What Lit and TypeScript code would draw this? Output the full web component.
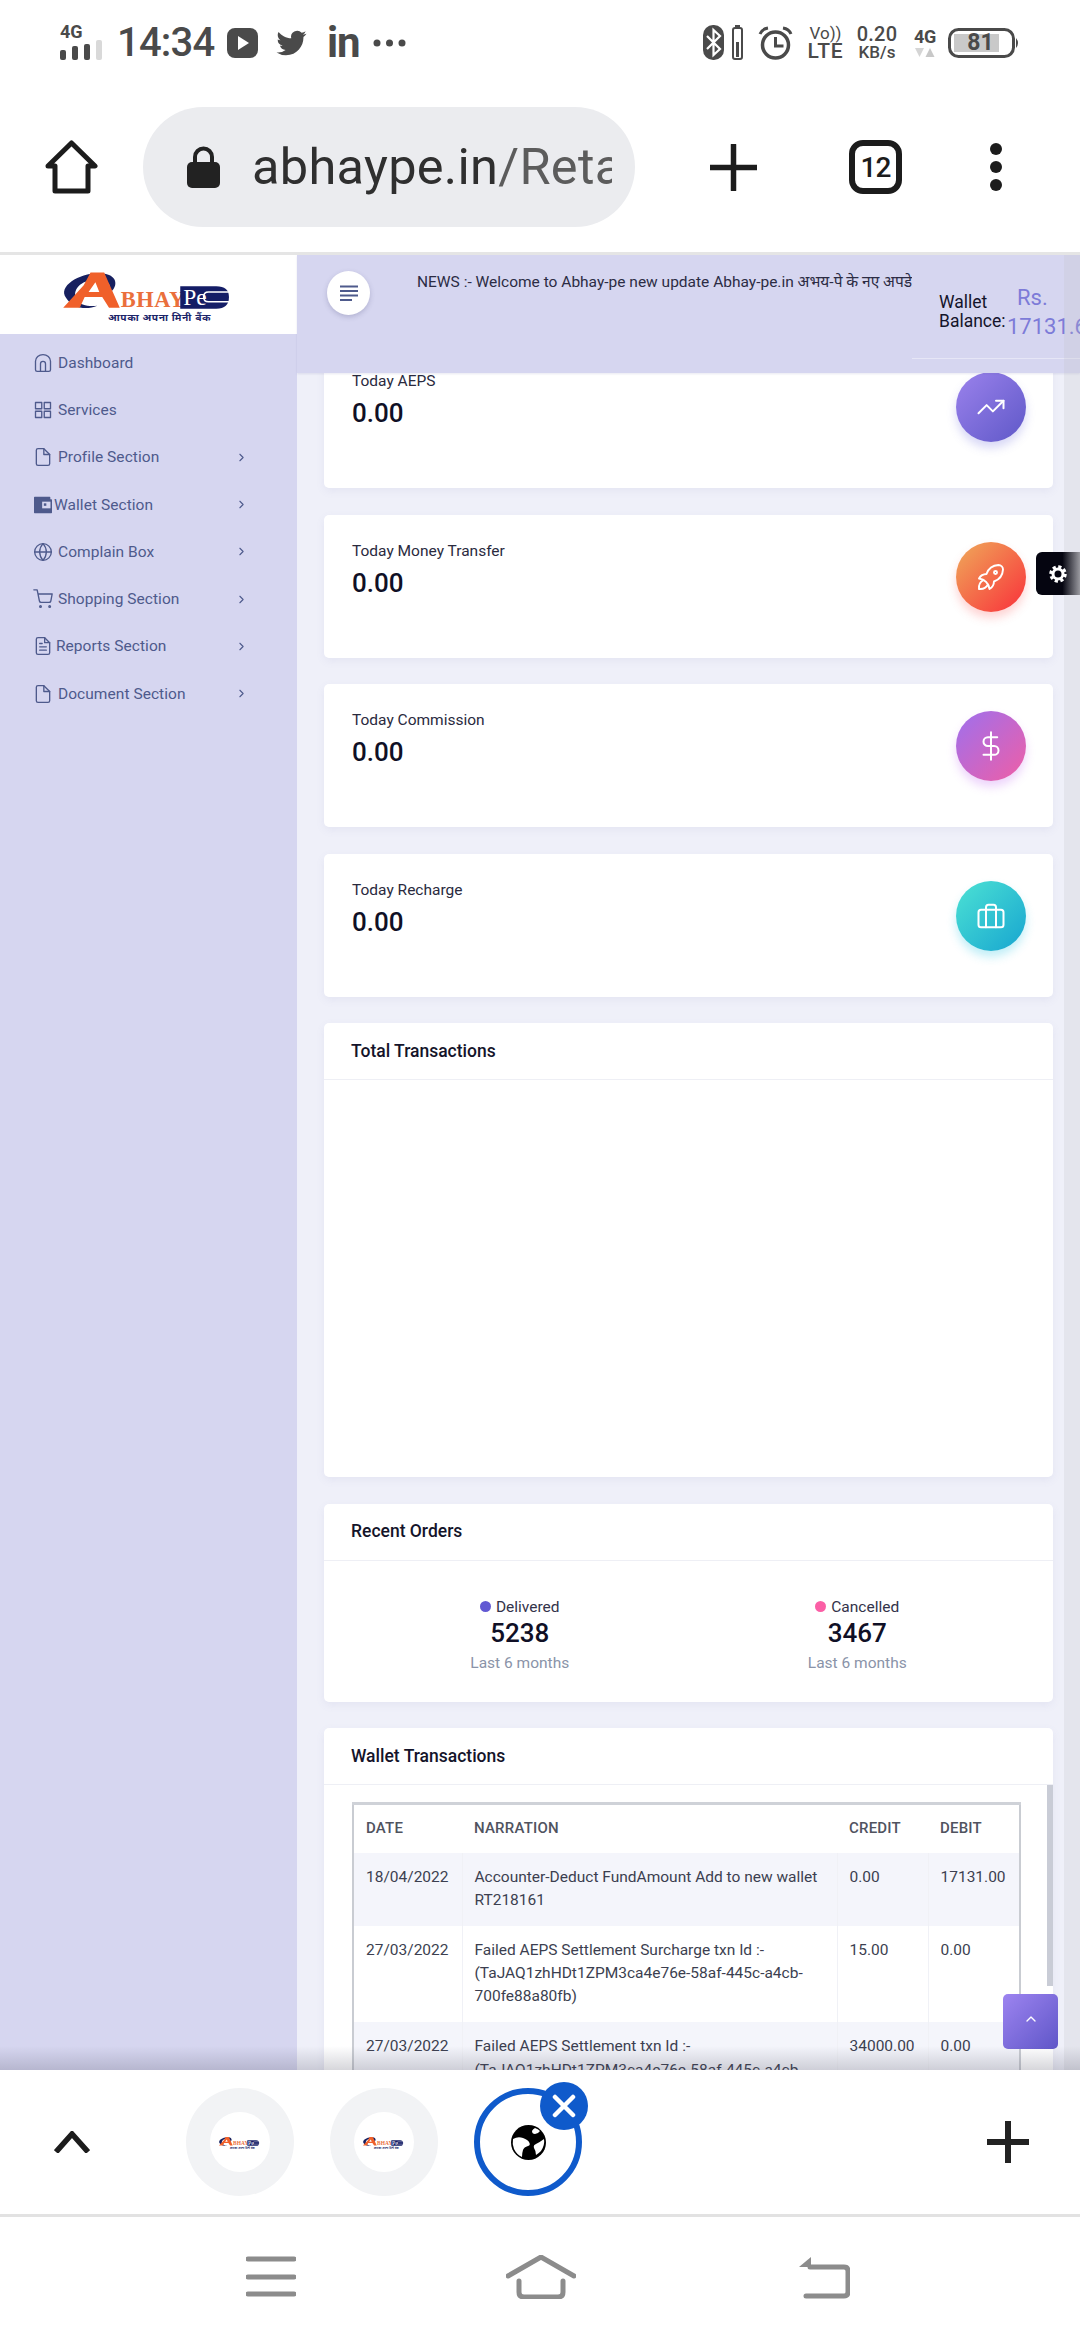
import { LitElement, html, css, svg } from "lit";
import { customElement } from "lit/decorators.js";

const logo = (cls: string) => html`<svg class=${cls} viewBox="0 0 220 80" aria-hidden="true">
  <path d="M24 43C14 30 42 15 62 18C78 20 78 33 66 40C72 30 68 24 56 24C42 24 30 32 34 44C38 51 48 52 56 51C44 56 30 53 24 43Z" fill="#17205f"/>
  <path d="M21 53L42 30L49 17H63L79 53H68L61 42H43L38 53ZM47 37H58L54 27Z" fill="#f0602a" fill-rule="evenodd"/>
  <text x="80" y="52" class="lg-b">BHAY</text>
  <path d="M141 31H178Q191 31 191 42Q191 54 178 54H141Z" fill="#141d66"/>
  <text x="144" y="50" class="lg-p">Pe</text>
  <path d="M191 37H170Q165 37 165 42Q165 47 170 47H191" fill="none" stroke="#fff" stroke-width="1.6"/>
  <text x="67" y="67" class="lg-h">आपका अपना मिनी बैंक</text>
</svg>`;

const feather = (body: unknown, cls = "ico") => html`<svg class=${cls} viewBox="0 0 24 24" fill="none" stroke="currentColor" stroke-width="2" stroke-linecap="round" stroke-linejoin="round" aria-hidden="true">${body}</svg>`;

const fileIcon = svg`<path d="M13 2H6a2 2 0 0 0-2 2v16a2 2 0 0 0 2 2h12a2 2 0 0 0 2-2V9z"/><path d="M13 2v7h7"/>`;
const sideItems: { label: string; icon: unknown; chev: boolean; cls?: string }[] = [
  { label: "Dashboard", chev: false, icon: svg`<path d="M3 10a9 8 0 0 1 18 0v10a2 2 0 0 1-2 2H5a2 2 0 0 1-2-2z"/><path d="M9 22V13a3 3 0 0 1 6 0v9"/>` },
  { label: "Services", chev: false, icon: svg`<rect x="3" y="3" width="7.5" height="7.5"/><rect x="13.5" y="3" width="7.5" height="7.5"/><rect x="13.5" y="13.5" width="7.5" height="7.5"/><rect x="3" y="13.5" width="7.5" height="7.5"/>` },
  { label: "Profile Section", chev: true, icon: fileIcon },
  { label: "Wallet Section", chev: true, cls: "tight", icon: svg`<path d="M2 3h18v3h2v15H2z" fill="currentColor"/><rect x="11" y="8" width="10" height="8" fill="#d6d6f0" stroke="none"/><rect x="13" y="10" width="3" height="3" fill="currentColor" stroke="none"/>` },
  { label: "Complain Box", chev: true, icon: svg`<circle cx="12" cy="12" r="10"/><path d="M2 12h20"/><path d="M12 2a15 15 0 0 1 4 10 15 15 0 0 1-4 10 15 15 0 0 1-4-10 15 15 0 0 1 4-10z"/>` },
  { label: "Shopping Section", chev: true, icon: svg`<circle cx="9" cy="21" r="1"/><circle cx="20" cy="21" r="1"/><path d="M1 1h4l2.7 13.4a2 2 0 0 0 2 1.6h9.7a2 2 0 0 0 2-1.6L23 6H6"/>` },
  { label: "Reports Section", chev: true, cls: "tight2", icon: svg`<path d="M14 2H6a2 2 0 0 0-2 2v16a2 2 0 0 0 2 2h12a2 2 0 0 0 2-2V8z"/><path d="M14 2v6h6"/><path d="M16 13H8"/><path d="M16 17H8"/><path d="M11 9H8"/>` },
  { label: "Document Section", chev: true, icon: fileIcon },
];

const stats = [
  { label: "Today AEPS", cls: "g-purple", big: false, icon: svg`<path d="M22 7l-8.5 8.5-5-5L2 17"/><path d="M16 7h6v6"/>` },
  { label: "Today Money Transfer", cls: "g-orange", big: true, icon: svg`<path d="M4 13a8 8 0 0 1 7 7a6 6 0 0 0 3-5a9 9 0 0 0 6-8a3 3 0 0 0-3-3a9 9 0 0 0-8 6a6 6 0 0 0-5 3"/><path d="M7 14a6 6 0 0 0-3 6a6 6 0 0 0 6-3"/><circle cx="15" cy="9" r="1"/>` },
  { label: "Today Commission", cls: "g-pink", big: false, icon: svg`<path d="M12 1v22"/><path d="M17 5H9.5a3.5 3.5 0 0 0 0 7h5a3.5 3.5 0 0 1 0 7H6"/>` },
  { label: "Today Recharge", cls: "g-teal", big: false, icon: svg`<rect x="2" y="7" width="20" height="14" rx="2"/><path d="M16 21V5a2 2 0 0 0-2-2h-4a2 2 0 0 0-2 2v16"/>` },
];

const rows = [
  ["18/04/2022", "Accounter-Deduct FundAmount Add to new wallet RT218161", "0.00", "17131.00"],
  ["27/03/2022", "Failed AEPS Settlement Surcharge txn Id :- (TaJAQ1zhHDt1ZPM3ca4e76e-58af-445c-a4cb-700fe88a80fb)", "15.00", "0.00"],
  ["27/03/2022", "Failed AEPS Settlement txn Id :- (TaJAQ1zhHDt1ZPM3ca4e76e-58af-445c-a4cb-700fe88a80fb)", "34000.00", "0.00"],
];

@customElement("app-root")
export class AppRoot extends LitElement {
  static styles = css`
    :host { display: block; width: 1080px; height: 2340px; overflow: hidden; background: #fff; font-family: Roboto, "Noto Sans Devanagari", "Lohit Devanagari", "Noto Sans", sans-serif; color: #15152a; }
    * { box-sizing: border-box; }
    svg { display: block; flex: none; }

    .status { height: 85px; display: flex; justify-content: space-between; align-items: center; padding: 0 60px 0 60px; color: #4a4a4a; }
    .st-group { display: flex; align-items: center; }
    .net { width: 44px; margin-right: 13px; }
    .net-t { font-size: 18px; font-weight: 700; line-height: 14px; letter-spacing: -.2px; }
    .bars { display: flex; align-items: flex-end; gap: 6px; height: 20px; margin-top: 1px; }
    .bars i { width: 6px; background: #4a4a4a; border-radius: 2px; }
    .bars i:nth-child(1) { height: 10px; } .bars i:nth-child(2) { height: 14px; } .bars i:nth-child(3) { height: 16px; } .bars i:nth-child(4) { height: 20px; background: #d9d9d9; }
    .time { font-size: 40px; font-weight: 500; line-height: 44px; width: 110px; letter-spacing: -.8px; }
    .yt { width: 31px; height: 30px; margin-right: 17px; }
    .tw { width: 33px; height: 30px; margin-right: 19px; }
    .in { font-size: 42px; font-weight: 700; line-height: 44px; width: 46px; letter-spacing: -1px; }
    .more { width: 33px; height: 8px; }
    .bt { width: 21px; height: 35px; margin-right: 8px; }
    .bs { width: 11px; height: 35px; margin-right: 15px; }
    .alarm { width: 35px; height: 35px; margin-right: 14px; }
    .volte { width: 37px; margin-right: 12px; text-align: center; }
    .vo { font-size: 17px; line-height: 18px; font-weight: 400; white-space: nowrap; letter-spacing: 0; }
    .lte { font-size: 21px; line-height: 19px; font-weight: 500; letter-spacing: .8px; }
    .speed { width: 42px; margin-right: 14px; text-align: center; }
    .sp1 { font-size: 20px; line-height: 19px; font-weight: 500; letter-spacing: .2px; }
    .sp2 { font-size: 17px; line-height: 17px; font-weight: 500; white-space: nowrap; }
    .g4 { width: 26px; margin-right: 10px; text-align: center; }
    .g4t { font-size: 18px; font-weight: 700; line-height: 18px; letter-spacing: -.3px; }
    .tri { width: 20px; height: 9px; margin: 2px auto 0; }
    .batt { width: 72px; height: 30px; position: relative; }
    .batt svg { width: 72px; height: 30px; }
    .batt span { position: absolute; left: 9px; right: 16px; top: 0; line-height: 30px; text-align: center; font-size: 23px; font-weight: 700; }

    .toolbar { height: 170px; border-bottom: 3px solid #e5e5e5; display: flex; align-items: center; padding: 0 0 3px 45px; position: relative; }
    .tb-home { width: 53px; height: 54px; margin-right: 45px; }
    .pill { width: 492px; height: 120px; border-radius: 60px; background: #ebecef; display: flex; align-items: center; padding-left: 44px; margin-right: 75px; }
    .lock { width: 33px; height: 42px; margin-right: 32px; }
    .url { width: 360px; overflow: hidden; white-space: nowrap; font-size: 50.5px; letter-spacing: .3px; line-height: 60px; color: #2f2f2f; }
    .url span { color: #5c5c5c; }
    .tb-plus { width: 47px; height: 47px; margin-right: 92px; }
    .tabbox { width: 53px; height: 54px; border: 6px solid #1c1c1c; border-radius: 14px; font-size: 28px; font-weight: 500; display: flex; align-items: center; justify-content: center; color: #1c1c1c; letter-spacing: -1px; margin-right: 88px; }
    .dots { display: flex; flex-direction: column; gap: 6px; }
    .dots i { width: 12px; height: 12px; border-radius: 50%; background: #1c1c1c; }

    .viewport { height: 1815px; display: flex; position: relative; overflow: hidden; background: #eff0f9; }
    .side { width: 297px; flex: none; background: #d6d6f0; }
    .brand { height: 79px; background: #fff; display: flex; justify-content: center; align-items: center; }
    .brand-logo { width: 220px; height: 78px; margin-left: 3px; }
    .lg-b { font: 700 23px "Liberation Serif", serif; fill: #ea6f3c; letter-spacing: .6px; }
    .lg-p { font: 400 24px "Liberation Serif", serif; fill: #fff; }
    .lg-h { font: 700 10.5px "Noto Sans Devanagari", "Lohit Devanagari", "Noto Sans", sans-serif; fill: #1b2468; letter-spacing: .6px; }
    .menu { padding-top: 5px; }
    .m-item { height: 47.3px; display: flex; align-items: center; padding: 0 49px 0 33px; color: #4e5a8c; font-size: 15.5px; letter-spacing: .05px; white-space: nowrap; }
    .m-item .ico { width: 20px; height: 20px; margin-right: 5px; stroke-width: 1.6; }
    .m-item.tight .ico { margin-right: 1px; }
    .m-item.tight2 .ico { margin-right: 3px; }
    .m-item .chev { width: 13px; height: 13px; margin-left: auto; margin-right: 0; }

    .main { flex: 1; min-width: 0; }
    .head { height: 118px; background: #d6d6f0; position: relative; z-index: 2; display: flex; box-shadow: 0 1px 2px rgba(100,100,160,.15); }
    .burger { width: 43px; height: 44px; border-radius: 50%; background: #fff; box-shadow: 0 2px 5px rgba(70,70,120,.25); margin: 16px 47px 0 30px; display: flex; align-items: center; justify-content: center; flex: none; }
    .burger svg { width: 20px; height: 16px; }
    .news { width: 495px; flex: none; overflow: hidden; white-space: nowrap; font-size: 15.5px; line-height: 20px; padding-top: 17px; color: #2c2c44; }
    .bal { width: 168px; height: 104px; flex: none; display: flex; border-bottom: 1px solid #e6e6f6; padding: 38px 0 0 27px; overflow: hidden; }
    .bal-l { font-size: 17.5px; line-height: 19px; color: #14142a; flex: none; width: 68px; padding-top: 0; }
    .bal-v { font-size: 22px; line-height: 29px; color: #7d7bd8; margin-top: -10px; white-space: nowrap; }
    .bal-v div:first-child { padding-left: 10px; }

    .content { padding: 0 27px; margin-top: -28px; display: flex; flex-direction: column; gap: 26.5px; }
    .card { background: #fff; border-radius: 5px; box-shadow: 0 3px 8px rgba(120,120,180,.09); position: relative; }
    .stat { height: 143px; display: flex; justify-content: space-between; padding: 27px 27px 0 28px; }
    .st-l { font-size: 15.5px; line-height: 18px; color: #2a2a3e; padding-top: 0; }
    .st-v { font-size: 26px; font-weight: 500; line-height: 30px; color: #101026; margin-top: 8px; }
    .circle { width: 70px; height: 70px; border-radius: 50%; display: flex; align-items: center; justify-content: center; color: #fff; flex: none; }
    .circle .ico { width: 30px; height: 30px; stroke-width: 1.6; }
    .circle .ico.big { width: 36px; height: 36px; stroke-width: 1.3; }
    .g-purple { background: linear-gradient(135deg, #9b82ec, #5f58c8); box-shadow: 0 6px 10px rgba(100,100,220,.25); }
    .g-orange { background: linear-gradient(135deg, #efaa5a, #f9303a); box-shadow: 0 6px 10px rgba(250,80,80,.25); }
    .g-pink { background: linear-gradient(135deg, #9e70ee, #ef5ea6); box-shadow: 0 6px 10px rgba(190,100,240,.28); }
    .g-teal { background: linear-gradient(135deg, #4ce2d4, #17a5d0); box-shadow: 0 6px 10px rgba(50,200,230,.3); }
    .c-head { height: 57px; border-bottom: 1px solid #eeeff5; padding: 0 27px 1px; display: flex; align-items: center; font-size: 17.5px; font-weight: 500; color: #14142a; }
    .total { height: 454px; }
    .orders { height: 198px; }
    .o-body { display: grid; grid-template-columns: 1fr 1fr; padding: 36px 27px 0; text-align: center; }
    .o-lab { font-size: 15.5px; line-height: 20px; color: #33334a; display: flex; justify-content: center; align-items: center; gap: 5px; }
    .dot { width: 11px; height: 11px; border-radius: 50%; }
    .dot.a { background: #6259d3; } .dot.b { background: #fb5fa6; }
    .o-num { font-size: 26px; font-weight: 500; line-height: 32px; color: #101026; }
    .o-sub { font-size: 15.5px; line-height: 20px; color: #8a93a8; margin-top: 4px; }
    .wallet { height: 500px; }
    .w-body { padding: 17px 34px 0 28px; }
    table { width: 667px; table-layout: fixed; border-collapse: collapse; border-top: 3px solid #cfd2d8; border-left: 2px solid #c9ccd2; border-right: 2px solid #c9ccd2; font-size: 15.5px; line-height: 23.2px; color: #3c3f50; }
    col.c1 { width: 109px; } col.c2 { width: 375px; } col.c3 { width: 91px; } col.c4 { width: 92px; }
    th { font-weight: 500; font-size: 15px; text-align: left; height: 49px; padding: 0 12px; color: #50535f; letter-spacing: .2px; }
    td { vertical-align: top; padding: 13.4px 12px; border-left: 1px solid #f0f1f6; }
    td:first-child { border-left: 0; }
    tr.odd td { background: #f4f5fb; }
    .w-scroll { position: absolute; right: 0; top: 57px; width: 6px; height: 201px; background: #c9ccd6; }

    .strip { position: absolute; right: 0; top: 0; bottom: 0; width: 16px; background: rgba(190,190,195,.22); z-index: 3; }
    .gear { position: absolute; left: 1036px; top: 297px; width: 44px; height: 43px; border-radius: 6px 0 0 6px; background: linear-gradient(90deg, #050510 60%, #9a9aa0); display: flex; align-items: center; padding-left: 13px; z-index: 4; }
    .gear svg { width: 18px; height: 18px; }
    .totop { position: absolute; left: 1003px; top: 1739px; width: 55px; height: 55px; border-radius: 5px; background: linear-gradient(135deg, #9d84f0, #5f56c8); color: #fff; display: flex; align-items: center; justify-content: center; z-index: 4; }
    .totop .ico { width: 16px; height: 16px; margin-top: -5px; }
    .fade { position: absolute; left: 0; right: 0; bottom: 0; height: 24px; background: linear-gradient(180deg, rgba(70,70,90,0), rgba(70,70,90,.22)); z-index: 5; }

    .tabs { height: 144px; display: flex; align-items: center; position: relative; padding-left: 54px; }
    .up { width: 36px; height: 22px; margin-right: 96px; }
    .tab { width: 108px; height: 108px; border-radius: 50%; background: #f2f3f5; display: flex; align-items: center; justify-content: center; margin-right: 36px; position: relative; flex: none; }
    .tab-in { width: 60px; height: 60px; border-radius: 50%; background: #fff; display: flex; align-items: center; justify-content: center; }
    .tab-logo { width: 52px; height: 19px; }
    .tab.on { background: #fff; border: 6px solid #0f5acb; margin-right: 0; }
    .globe { width: 35px; height: 35px; }
    .close { position: absolute; right: -12px; top: -12px; width: 48px; height: 48px; border-radius: 50%; background: #0f5acb; display: flex; align-items: center; justify-content: center; }
    .close svg { width: 24px; height: 24px; }
    .tab-plus { width: 42px; height: 42px; margin-left: auto; margin-right: 51px; }

    .nav { height: 126px; border-top: 3px solid #e2e2e2; display: flex; padding: 38px 0 0 246px; }
    .nav svg { height: 44px; }
    .n1 { width: 50px; margin-right: 210px; }
    .n2 { width: 70px; margin-right: 222px; }
    .n3 { width: 52px; }
  `;

  render() {
    return html`
      <section class="status">
        <div class="st-group">
          <div class="net"><div class="net-t">4G</div><div class="bars"><i></i><i></i><i></i><i></i></div></div>
          <div class="time">14:34</div>
          <svg class="yt" viewBox="0 0 31 30"><rect width="31" height="30" rx="8" fill="#4a4a4a"/><path d="M11 8l11 7-11 7z" fill="#fff"/></svg>
          <svg class="tw" viewBox="0 0 24 24"><path fill="#4a4a4a" d="M23.953 4.57a10 10 0 01-2.825.775 4.958 4.958 0 002.163-2.723c-.951.555-2.005.959-3.127 1.184a4.92 4.92 0 00-8.384 4.482C7.69 8.095 4.067 6.13 1.64 3.162a4.822 4.822 0 00-.666 2.475c0 1.71.87 3.213 2.188 4.096a4.904 4.904 0 01-2.228-.616v.06a4.923 4.923 0 003.946 4.827 4.996 4.996 0 01-2.212.085 4.936 4.936 0 004.604 3.417 9.867 9.867 0 01-6.102 2.105c-.39 0-.779-.023-1.17-.067a13.995 13.995 0 007.557 2.209c9.053 0 13.998-7.496 13.998-13.985 0-.21 0-.42-.015-.63A9.935 9.935 0 0024 4.59z"/></svg>
          <div class="in">in</div>
          <svg class="more" viewBox="0 0 33 8"><circle cx="4" cy="4" r="3.5" fill="#4a4a4a"/><circle cx="16.5" cy="4" r="3.5" fill="#4a4a4a"/><circle cx="29" cy="4" r="3.5" fill="#4a4a4a"/></svg>
        </div>
        <div class="st-group">
          <svg class="bt" viewBox="0 0 21 35"><rect width="21" height="35" rx="10" fill="#4a4a4a"/><path d="M4 11l13 13-6.5 6V5l6.5 6L4 24" fill="none" stroke="#fff" stroke-width="2.2"/></svg>
          <svg class="bs" viewBox="0 0 11 35"><rect x="3" y="0" width="5" height="3" fill="#4a4a4a"/><rect x="1" y="3" width="9" height="31" rx="2" fill="none" stroke="#4a4a4a" stroke-width="2"/><rect x="4" y="17" width="3" height="15" fill="#4a4a4a"/></svg>
          <svg class="alarm" viewBox="0 0 35 35" fill="none" stroke="#4a4a4a" stroke-width="3.5"><circle cx="17.5" cy="20" r="13"/><path d="M17.5 12v9h8" stroke-width="3"/><path d="M2 9q2-5 8-6M33 9q-2-5-8-6" stroke-width="3"/></svg>
          <div class="volte"><div class="vo">Vo))</div><div class="lte">LTE</div></div>
          <div class="speed"><div class="sp1">0.20</div><div class="sp2">KB/s</div></div>
          <div class="g4"><div class="g4t">4G</div><svg class="tri" viewBox="0 0 20 9"><path d="M0 0h9L4.5 9z" fill="#d5d5d5"/><path d="M10.5 9h9L15 0z" fill="#c8c8c8"/></svg></div>
          <div class="batt"><svg viewBox="0 0 72 30"><rect x="1.5" y="1.5" width="64" height="27" rx="9" fill="none" stroke="#4a4a4a" stroke-width="3"/><path d="M6 6h45v18H6z" fill="#c9c9c9"/><path d="M68 10q4 5 0 10z" fill="#4a4a4a"/></svg><span>81</span></div>
        </div>
      </section>

      <section class="toolbar">
        <svg class="tb-home" viewBox="0 0 53 54" fill="none" stroke="#1c1c1c" stroke-width="5" stroke-linejoin="round"><path d="M3 26L26.5 3 50 26H43V51H10V26Z"/></svg>
        <div class="pill">
          <svg class="lock" viewBox="0 0 33 42"><path d="M8 18V11a8.5 8.5 0 0 1 17 0v7" fill="none" stroke="#222" stroke-width="4"/><rect y="16" width="33" height="26" rx="5" fill="#222"/></svg>
          <div class="url">abhaype.in<span>/Retailer</span></div>
        </div>
        <svg class="tb-plus" viewBox="0 0 47 47"><path d="M23.5 1v45M1 23.5h45" stroke="#1c1c1c" stroke-width="5.5" stroke-linecap="round"/></svg>
        <div class="tabbox">12</div>
        <div class="dots"><i></i><i></i><i></i></div>
      </section>

      <section class="viewport">
        <aside class="side">
          <div class="brand">${logo("brand-logo")}</div>
          <nav class="menu">
            ${sideItems.map((m) => html`<div class="m-item ${m.cls ?? ""}">${feather(m.icon)}<span>${m.label}</span>${m.chev ? feather(svg`<path d="M9 18l6-6-6-6"/>`, "chev") : ""}</div>`)}
          </nav>
        </aside>
        <main class="main">
          <header class="head">
            <div class="burger"><svg viewBox="0 0 20 16"><path d="M1 1.5h18M1 6h18M1 10.5h18M1 15h12" stroke="#4e5a8c" stroke-width="1.8"/></svg></div>
            <div class="news">NEWS :- Welcome to Abhay-pe new update Abhay-pe.in अभय-पे के नए अपडेट में आपका स्वागत है</div>
            <div class="bal">
              <div class="bal-l">Wallet Balance:</div>
              <div class="bal-v"><div>Rs.</div><div>17131.68</div></div>
            </div>
          </header>
          <div class="content">
            ${stats.map((s) => html`<div class="card stat"><div><div class="st-l">${s.label}</div><div class="st-v">0.00</div></div><div class="circle ${s.cls}">${feather(s.icon, s.big ? "ico big" : "ico")}</div></div>`)}
            <div class="card total"><div class="c-head">Total Transactions</div></div>
            <div class="card orders">
              <div class="c-head">Recent Orders</div>
              <div class="o-body">
                <div><div class="o-lab"><span class="dot a"></span>Delivered</div><div class="o-num">5238</div><div class="o-sub">Last 6 months</div></div>
                <div><div class="o-lab"><span class="dot b"></span>Cancelled</div><div class="o-num">3467</div><div class="o-sub">Last 6 months</div></div>
              </div>
            </div>
            <div class="card wallet">
              <div class="c-head">Wallet Transactions</div>
              <div class="w-scroll"></div>
              <div class="w-body">
                <table>
                  <colgroup><col class="c1"/><col class="c2"/><col class="c3"/><col class="c4"/></colgroup>
                  <thead><tr><th>DATE</th><th>NARRATION</th><th>CREDIT</th><th>DEBIT</th></tr></thead>
                  <tbody>${rows.map((r, i) => html`<tr class=${i % 2 === 0 ? "odd" : ""}>${r.map((c) => html`<td>${c}</td>`)}</tr>`)}</tbody>
                </table>
              </div>
            </div>
          </div>
        </main>
        <div class="strip"></div>
        <div class="gear"><svg viewBox="0 0 18 18" fill="none" stroke="#fff"><circle cx="9" cy="9" r="7" stroke-width="3.5" stroke-dasharray="3.1 2.4"/><circle cx="9" cy="9" r="5" stroke-width="3"/></svg></div>
        <div class="totop">${feather(svg`<path d="M6 15l6-6 6 6"/>`)}</div>
        <div class="fade"></div>
      </section>

      <section class="tabs">
        <svg class="up" viewBox="0 0 36 22" fill="none" stroke="#1c1c1c" stroke-width="5.5"><path d="M2 21L18 3l16 18" stroke-linejoin="miter"/></svg>
        <div class="tab"><div class="tab-in">${logo("tab-logo")}</div></div>
        <div class="tab"><div class="tab-in">${logo("tab-logo")}</div></div>
        <div class="tab on">
          <svg class="globe" viewBox="0 0 35 35"><circle cx="17.5" cy="17.5" r="17.5" fill="#000"/><path d="M2 14q5-3 10-1t6 4q2 3-1 4-4 1-5 4t-1 7q-5-2-8-8-2-5-1-10zM33 14q1 6-3 12-2 2-5 4 0-4-2-7-1-3 2-4 4-2 8-5zM24 3q3 1 5 3-2 3-5 3t-3-3q1-2 3-3z" fill="#fff"/></svg>
          <div class="close"><svg viewBox="0 0 24 24"><path d="M3 3l18 18M21 3L3 21" stroke="#fff" stroke-width="4.5" stroke-linecap="round"/></svg></div>
        </div>
        <svg class="tab-plus" viewBox="0 0 42 42"><path d="M21 0v42M0 21h42" stroke="#222" stroke-width="6"/></svg>
      </section>
      <section class="nav">
        <svg class="n1" viewBox="0 0 50 44"><path d="M2 4h46M2 22h46M2 39h46" stroke="#8c8c8c" stroke-width="5" stroke-linecap="round"/></svg>
        <svg class="n2" viewBox="0 0 70 44" fill="none" stroke="#8c8c8c" stroke-width="5" stroke-linecap="round" stroke-linejoin="round"><path d="M2 21L35 2l33 19"/><path d="M13 26v11q0 5 5 5h34q5 0 5-5V26"/></svg>
        <svg class="n3" viewBox="0 0 52 44" fill="none" stroke="#8c8c8c" stroke-width="5" stroke-linecap="round" stroke-linejoin="round"><path d="M8 41h38q4 0 4-4V16q0-4-4-4H12"/><path d="M13 2L1 12h12z" fill="#8c8c8c" stroke="none"/></svg>
      </section>
    `;
  }
}
